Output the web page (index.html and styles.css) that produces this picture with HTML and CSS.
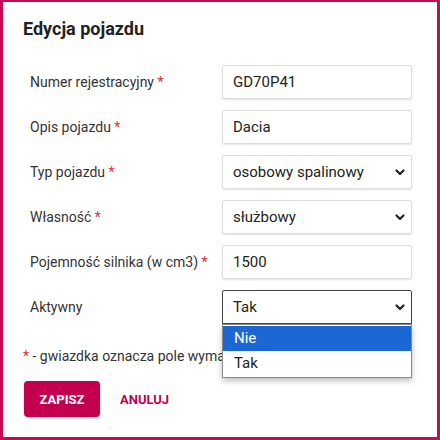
FILE: index.html
```html
<!DOCTYPE html>
<html lang="pl">
<head>
<meta charset="utf-8">
<title>Edycja pojazdu</title>
<link rel="stylesheet" href="styles.css">
</head>
<body>
<div class="frame">
  <h1 class="title">Edycja pojazdu</h1>
  <form class="form">
    <div class="row">
      <label class="label">Numer rejestracyjny <span class="req">*</span></label>
      <div class="field">GD70P41</div>
    </div>
    <div class="row">
      <label class="label">Opis pojazdu <span class="req">*</span></label>
      <div class="field">Dacia</div>
    </div>
    <div class="row">
      <label class="label">Typ pojazdu <span class="req">*</span></label>
      <div class="field select">osobowy spalinowy
        <svg class="chev" width="10" height="7" viewBox="0 0 10 7"><path d="M1.5 1.5 L5 5 L8.5 1.5" fill="none" stroke="#222" stroke-width="2.2" stroke-linecap="round" stroke-linejoin="round"/></svg>
      </div>
    </div>
    <div class="row">
      <label class="label">Własność <span class="req">*</span></label>
      <div class="field select">służbowy
        <svg class="chev" width="10" height="7" viewBox="0 0 10 7"><path d="M1.5 1.5 L5 5 L8.5 1.5" fill="none" stroke="#222" stroke-width="2.2" stroke-linecap="round" stroke-linejoin="round"/></svg>
      </div>
    </div>
    <div class="row">
      <label class="label">Pojemność silnika (w cm3) <span class="req">*</span></label>
      <div class="field">1500</div>
    </div>
    <div class="row">
      <label class="label">Aktywny</label>
      <div class="field select focused">Tak
        <svg class="chev" width="10" height="7" viewBox="0 0 10 7"><path d="M1.5 1.5 L5 5 L8.5 1.5" fill="none" stroke="#222" stroke-width="2.2" stroke-linecap="round" stroke-linejoin="round"/></svg>
        <ul class="dropdown">
          <li class="opt active">Nie</li>
          <li class="opt">Tak</li>
        </ul>
      </div>
    </div>
    <p class="note"><span class="req">*</span> - gwiazdka oznacza pole wymagane</p>
    <div class="actions">
      <button type="button" class="btn-primary">ZAPISZ</button>
      <button type="button" class="btn-link">ANULUJ</button>
    </div>
  </form>
</div>
</body>
</html>
```
FILE: styles.css
```css
* { box-sizing: border-box; }
html, body { margin: 0; padding: 0; background: #fff; }
body { font-family: Roboto, "Liberation Sans", sans-serif; color: #333; }
.frame {
  width: 440px;
  height: 440px;
  border: 3px solid #c80a55;
  border-top-width: 2px;
  padding: 15px 0 0 20px;
  overflow: hidden;
}
.title {
  margin: 0;
  font-size: 18px;
  font-weight: 700;
  color: #222;
  line-height: 24px;
}
.form { margin-top: 24px; }
.row {
  display: flex;
  align-items: center;
  height: 34px;
  margin-bottom: 11px;
}
.label {
  width: 199px;
  padding-left: 7px;
  font-size: 14px;
  color: #333;
}
.req { color: #e0302a; }
.field {
  position: relative;
  width: 190px;
  height: 34px;
  border: 1px solid #dedede;
  border-radius: 2px;
  box-shadow: 0 1px 2px rgba(0,0,0,0.12);
  padding: 0 10px;
  font-size: 15px;
  line-height: 32px;
  color: #222;
}
.select { padding-right: 30px; }
.chev { position: absolute; right: 6px; top: 13px; }
.focused {
  border: 1px solid #444;
  border-radius: 2px 2px 0 0;
  box-shadow: none;
}
.dropdown {
  position: absolute;
  left: -1px;
  top: 33px;
  width: 190px;
  margin: 0;
  padding: 1px 0;
  list-style: none;
  background: #fff;
  border: 1px solid #8a8a8a;
  box-shadow: 0 3px 6px rgba(0,0,0,0.25);
  z-index: 2;
}
.opt {
  height: 25px;
  line-height: 25px;
  padding-left: 11px;
  font-size: 15px;
  color: #222;
}
.opt.active { background: #1b67d4; color: #fff; }
.note {
  margin: 22px 0 0;
  font-size: 14px;
  color: #333;
  line-height: 20px;
}
.actions {
  display: flex;
  align-items: center;
  margin-top: 15px;
  margin-left: 1px;
}
.btn-primary {
  width: 76px;
  height: 36px;
  border: none;
  border-radius: 4px;
  background: #c2004f;
  color: #fff;
  font-family: Roboto, "Liberation Sans", sans-serif;
  font-weight: 700;
  font-size: 13px;
  box-shadow: 0 1px 3px rgba(0,0,0,0.2);
  padding: 0;
}
.btn-link {
  margin-left: 20px;
  border: none;
  background: none;
  padding: 0;
  color: #c2004f;
  font-family: Roboto, "Liberation Sans", sans-serif;
  font-weight: 700;
  font-size: 13px;
}
```
